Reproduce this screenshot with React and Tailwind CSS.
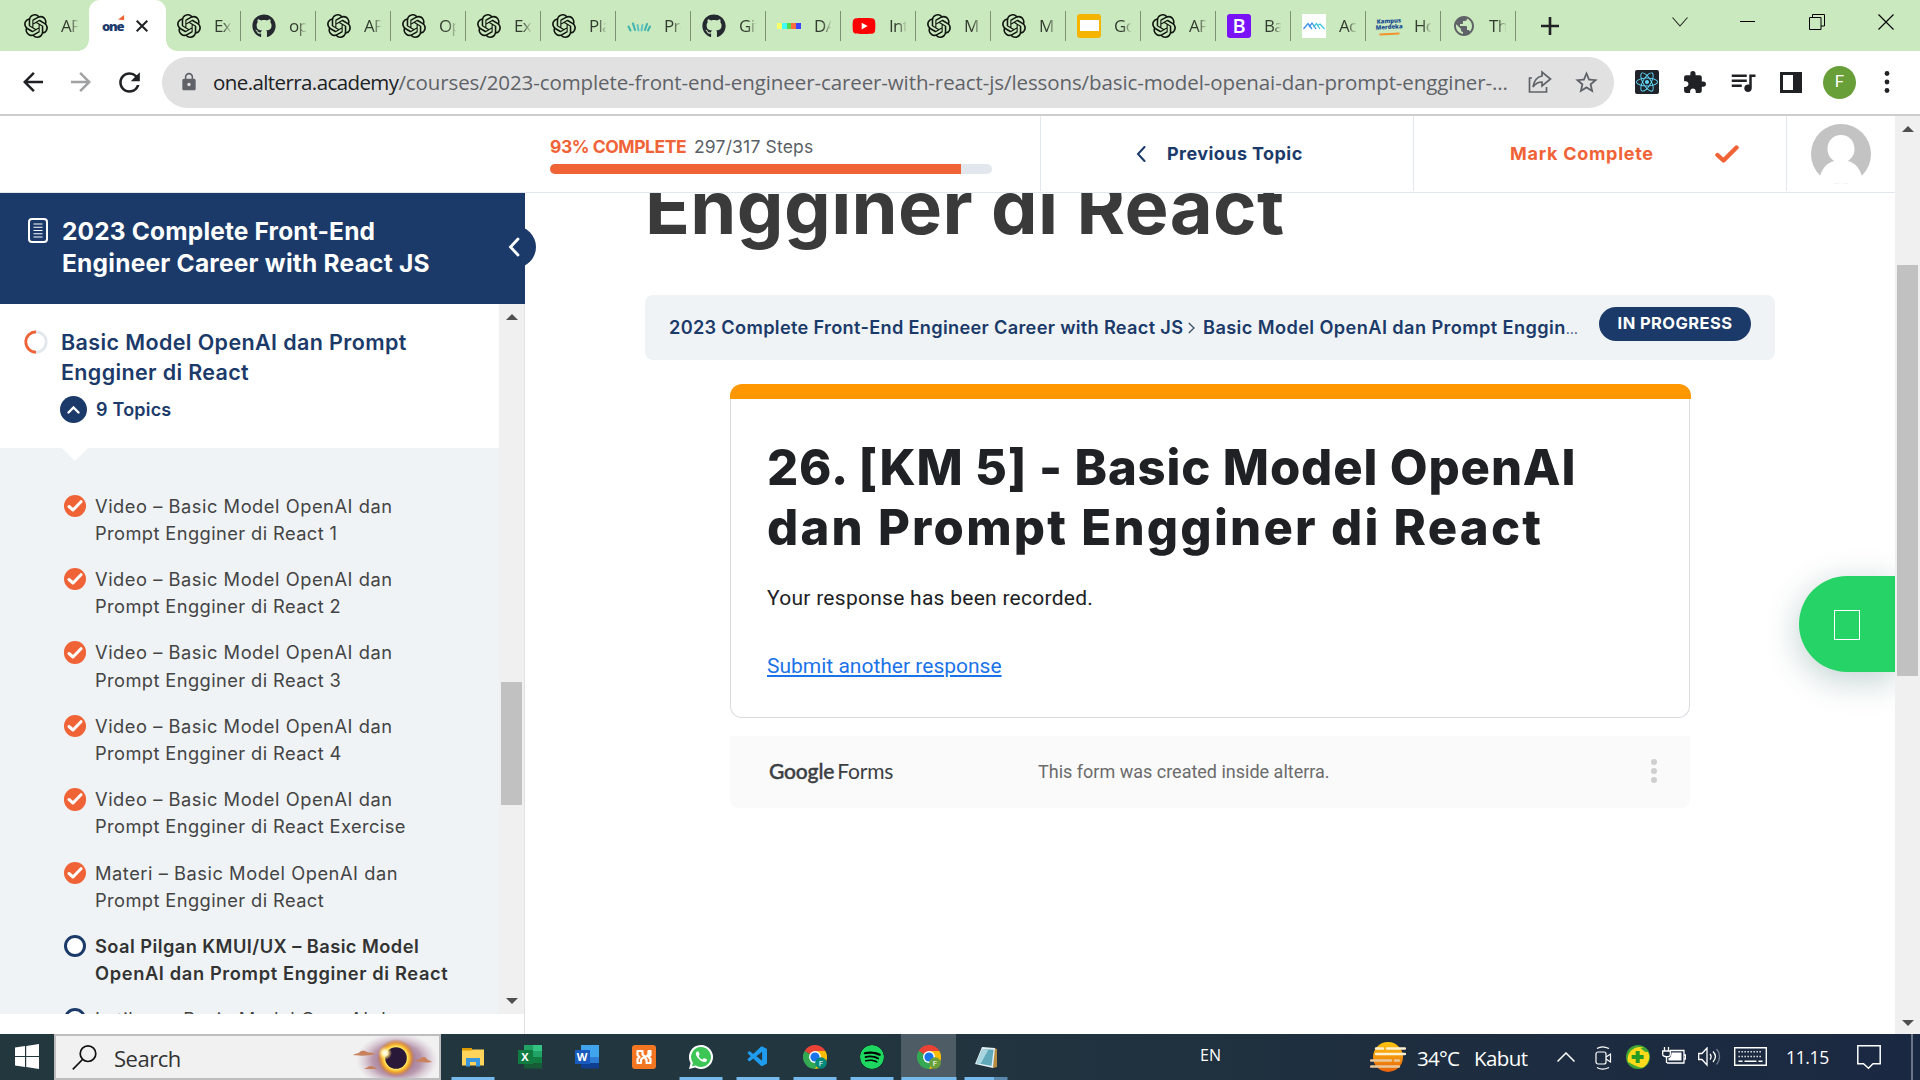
import React from "react";
import { SiOpenai, SiSpotify } from "react-icons/si";
import { FaGithub, FaYoutube, FaReact } from "react-icons/fa";
import { MdArrowBack, MdArrowForward, MdRefresh, MdLock, MdStarBorder, MdExtension, MdQueueMusic, MdPublic } from "react-icons/md";
import { VscVscode } from "react-icons/vsc";

const Gpt = () => <SiOpenai className="size-6 text-[#10160f]" />;
const Github = () => <FaGithub className="size-6 text-[#24292f]" />;
const Youtube = () => <FaYoutube className="size-6 bg-[linear-gradient(#fff,#fff)] bg-[length:10px_10px] bg-center bg-no-repeat text-[#ff0000]" />;
const Wave = () => (
  <svg viewBox="0 0 24 24" className="size-6" fill="none" strokeWidth="2" strokeLinecap="round">
    <path d="M1.500 12.500l2 4M6 9.500l2 6.500M20 10l-2 6M23 12.500l-2 4" stroke="#3eb2ad" />
    <path d="M10.500 11l1 5.500M15.500 11l-1 5.500" stroke="#5fc4bd" />
  </svg>
);
const Dalle = () => (
  <div className="flex h-6 w-6 items-center">
    <i className="h-1.5 w-[5px] bg-[#ffff66]" /><i className="h-1.5 w-[5px] bg-[#42ffff]" /><i className="h-1.5 w-[4px] bg-[#51da4c]" />
    <i className="h-1.5 w-[5px] bg-[#ff6e3c]" /><i className="h-1.5 w-[5px] bg-[#3c46ff]" />
  </div>
);
const Slides = () => <div className="flex size-6 items-center justify-center rounded-[3px] bg-[#f5b400]"><i className="h-[11px] w-[19px] bg-white" /></div>;
const Bootstrap = () => <div className="flex size-6 items-center justify-center rounded-[3px] bg-[#7a12f8] text-[20px] leading-6 font-semibold text-white">B</div>;
const Peaks = () => (
  <svg viewBox="0 0 24 24" className="size-6 bg-white" fill="none" strokeWidth="1.300">
    <path d="M1.500 15l4.500-5.500 4 5.500M7 13l3-4 4 6" stroke="#3a8fea" />
    <path d="M11.500 13l3-3.500 3.500 5.500M15 12l3-2 4.500 5" stroke="#3cc8d8" />
  </svg>
);
const Kampus = () => (
  <div className="flex h-6 w-6 -rotate-3 flex-col items-center justify-center text-[6px] leading-[6.500px] font-extrabold tracking-[-0.1px] text-[#1b4f94]">
    <span>Kampus</span><span>Merdeka</span><i className="mt-0.5 h-[2px] w-5 bg-[#f2922c]" />
  </div>
);
const Globe = () => <MdPublic className="size-6 text-[#5f6368]" />;

const TABS = [
  [Gpt, "Exa"], [Github, "ope"], [Gpt, "API"], [Gpt, "Ope"], [Gpt, "Exa"], [Gpt, "Play"], [Wave, "Pro"], [Github, "Git"], [Dalle, "DAL"],
  [Youtube, "Intr"], [Gpt, "M"], [Gpt, "M"], [Slides, "Goo"], [Gpt, "API"], [Bootstrap, "Bas"], [Peaks, "Acc"], [Kampus, "Hor"], [Globe, "The"],
];

const TabBody = ({ Icon, label }) => (
  <>
    <div className="ml-[11px] shrink-0"><Icon /></div>
    <span className="ml-[13px] w-[17px] overflow-hidden text-[17px] leading-6 tracking-[-0.7px] whitespace-nowrap text-[#333c30] [mask-image:linear-gradient(90deg,#000_50%,transparent_105%)]">{label}</span>
  </>
);

function TabStrip() {
  return (
    <div className="relative flex h-[51px] items-start bg-[#cbe9be] font-['Open_Sans',sans-serif]">
      <div className="ml-[13px] flex h-[51px] w-[76px] items-center"><TabBody Icon={Gpt} label="API" /></div>
      <div className="relative flex h-[51px] w-[77px] items-center rounded-t-[11px] bg-white before:absolute before:bottom-0 before:-left-[11px] before:size-[11px] before:bg-[radial-gradient(circle_at_0_0,transparent_10.5px,#fff_11px)] after:absolute after:-right-[11px] after:bottom-0 after:size-[11px] after:bg-[radial-gradient(circle_at_100%_0,transparent_10.5px,#fff_11px)]">
        <div className="relative ml-[13px] w-[22px] text-[13px] leading-5 font-extrabold tracking-[-1.200px] text-[#1b3a6b]">
          one
          <svg viewBox="0 0 8 8" className="absolute -top-px -right-px size-[7px]" fill="#ef6337"><path d="M0 5L7 0v6z" /></svg>
        </div>
        <svg viewBox="0 0 12 12" className="ml-3 size-3" stroke="#202124" strokeWidth="2"><path d="M.7.7l10.600 10.600M11.300.7L.7 11.300" /></svg>
      </div>
      {TABS.map(([Icon, label], i) => (
        <div key={i} className="relative flex h-[51px] w-[75px] items-center after:absolute after:top-[11px] after:right-0 after:h-[30px] after:w-px after:bg-[#7c9273]">
          <TabBody Icon={Icon} label={label} />
        </div>
      ))}
      <svg viewBox="0 0 20 20" className="mt-4 ml-6 size-5" stroke="#202124" strokeWidth="2.600"><path d="M10 1v18M1 10h18" /></svg>
      <svg viewBox="0 0 16 10" className="mt-[17px] ml-[112px] h-2.5 w-4" fill="none" stroke="#222" strokeWidth="1.100"><path d="M.5.5L8 9 15.500.5" /></svg>
      <i className="mt-[21px] ml-[52px] h-px w-[15px] bg-black" />
      <svg viewBox="0 0 16 16" className="mt-[14px] ml-[54px] size-4" fill="none" stroke="#000" strokeWidth="1"><path d="M.5 3.500h11.500v12H.5zM3.500 3.500v-3h12v11.500H12" /></svg>
      <svg viewBox="0 0 16 16" className="mt-[14px] ml-[53px] size-4" stroke="#000" strokeWidth="1.100"><path d="M.5.5l15 15M15.500.5l-15 15" /></svg>
    </div>
  );
}

function Toolbar() {
  return (
    <div className="flex h-[65px] items-center border-b-2 border-[#cdcdcd] bg-white pb-px font-['Open_Sans',sans-serif]">
      <MdArrowBack className="ml-[18px] size-[30px] text-[#202124]" />
      <MdArrowForward className="ml-[18px] size-[30px] text-[#a0a1a3]" />
      <MdRefresh className="ml-[18px] size-[31px] text-[#202124]" />
      <div className="ml-[17px] flex h-[51px] w-[1452px] items-center rounded-full bg-[#e1e1e1] text-[20.500px] leading-[51px]">
        <MdLock className="ml-[17px] size-5 text-[#5f6368]" />
        <div className="ml-[14px] w-[1304px] whitespace-nowrap text-[#5f6368]">
          <span className="tracking-[-0.590px] text-[#202124]">one.alterra.academy</span>
          <span className="tracking-[-0.100px]">/courses/2023-complete-front-end-engineer-career-with-react-js/lessons/basic-model-openai-dan-prompt-engginer-...</span>
        </div>
        <svg viewBox="0 0 24 24" className="ml-[11px] size-6" fill="none" stroke="#5f6368" strokeWidth="1.700"><path d="M4 8H1.500v14h17v-5M14 6V2l8.500 7L14 16v-4c-4 0-6.500 1.500-9 5 1-6 3.500-10 9-11z" /></svg>
        <MdStarBorder className="ml-[21px] size-[27px] text-[#5f6368]" />
      </div>
      <div className="ml-[21px] flex size-6 items-center justify-center rounded-[2px] bg-[#20232a]"><FaReact className="size-[22px] text-[#61dafb]" /></div>
      <MdExtension className="ml-[23px] size-[25px] text-[#202124]" />
      <MdQueueMusic className="ml-[21px] size-[30px] text-[#202124]" />
      <svg viewBox="0 0 22 21" className="ml-[22px] h-[21px] w-[22px]"><path d="M0 0h22v21H0zM3 3v15h10V3z" fill="#202124" fillRule="evenodd" /></svg>
      <div className="ml-[21px] flex size-[33px] items-center justify-center rounded-full bg-[#689f38] font-['Roboto',sans-serif] text-[17px] text-white">F</div>
      <svg viewBox="0 0 6 22" className="ml-7 h-[22px] w-1.5" fill="#202124"><circle cx="3" cy="2.500" r="2.400" /><circle cx="3" cy="11" r="2.400" /><circle cx="3" cy="19.500" r="2.400" /></svg>
    </div>
  );
}

function CourseHeader() {
  return (
    <header className="flex h-[77px] border-b border-[#e2e7ed] bg-white">
      <div className="w-[1040px] pt-[18px] pl-[550px]">
        <div className="flex text-[17.500px] leading-[26px] whitespace-nowrap">
          <span className="w-[144px] font-bold tracking-[-0.450px] text-[#ef6337]">93% COMPLETE</span>
          <span className="tracking-[0.180px] text-[#5a5f66]">297/317 Steps</span>
        </div>
        <div className="mt-1 h-2.5 w-[442px] overflow-hidden rounded-full bg-[#e2e7ed]"><div className="h-full w-[411px] bg-[#ef6337]" /></div>
      </div>
      <div className="mb-px flex w-[373px] items-center border-l border-[#e2e7ed] text-[18px] font-bold text-[#1b3a69]">
        <svg viewBox="0 0 10 16" className="ml-[95px] h-4 w-2.5" fill="none" stroke="#1b3a69" strokeWidth="2" strokeLinecap="round"><path d="M8.500 1L2 8l6.500 7" /></svg>
        <span className="ml-[21px] tracking-[0.430px]">Previous Topic</span>
      </div>
      <div className="mb-px flex w-[373px] items-center border-l border-[#e2e7ed] text-[18px] font-bold text-[#ef6337]">
        <span className="ml-24 w-[205px] tracking-[0.720px]">Mark Complete</span>
        <svg viewBox="0 0 24 18" className="h-[18px] w-6" fill="none" stroke="#ef6337" strokeWidth="4.400" strokeLinecap="round" strokeLinejoin="round"><path d="M2.500 10l6 5.500L21.500 2.500" /></svg>
      </div>
      <div className="mb-px flex flex-1 border-l border-[#e2e7ed]">
        <svg viewBox="0 0 60 60" className="mt-2 ml-6 size-[60px]">
          <circle cx="30" cy="30" r="30" fill="#c3c3c3" />
          <path d="M30 11c-8 0-13.500 6-13.500 14 0 5.500 3 10 7 12C15 38.500 11 46 9 52c4 5 12 8 21 8s17-3 21-8c-2-6-6-13.500-14.500-15 4-2 7-6.500 7-12 0-8-5.500-14-13.500-14z" fill="#fff" />
        </svg>
      </div>
    </header>
  );
}

const Arrow = ({ down }) => (
  <svg viewBox="0 0 12 6" className="h-1.5 w-3" fill="#505050"><path d={down ? "M0 0h12L6 6z" : "M6 0l6 6H0z"} /></svg>
);

const DONE = [
  ["Video – Basic Model OpenAI dan", "Prompt Engginer di React 1"],
  ["Video – Basic Model OpenAI dan", "Prompt Engginer di React 2"],
  ["Video – Basic Model OpenAI dan", "Prompt Engginer di React 3"],
  ["Video – Basic Model OpenAI dan", "Prompt Engginer di React 4"],
  ["Video – Basic Model OpenAI dan", "Prompt Engginer di React Exercise"],
  ["Materi – Basic Model OpenAI dan", "Prompt Engginer di React"],
];

const OpenRing = () => <i className="mt-[9px] size-[22.500px] shrink-0 rounded-full border-[3px] border-[#1b3a69] bg-white" />;

function Sidebar() {
  return (
    <aside className="flex w-[525px] flex-col border-r border-[#dfe2e5] bg-white">
      <div className="relative z-10 -mr-px flex h-[111px] bg-[#1b3a69] text-white">
        <svg viewBox="0 0 20 25" className="mt-[25px] ml-7 h-[25px] w-5" fill="none" stroke="#fff">
          <rect x="1" y="1" width="18" height="23" rx="3" strokeWidth="2" /><path d="M5.500 6h9M5.500 9.250h9M5.500 12.500h9M5.500 15.750h9M5.500 19h9" strokeWidth="1.200" />
        </svg>
        <h2 className="mt-[22px] ml-[14px] text-[24.500px] leading-8 font-bold whitespace-nowrap">
          <span className="block tracking-[0.160px]">2023 Complete Front-End</span>
          <span className="block tracking-[0.230px]">Engineer Career with React JS</span>
        </h2>
        <div className="absolute top-[33px] left-[494px] flex size-[42px] items-center justify-center rounded-full bg-[#1b3a69]">
          <svg viewBox="0 0 12 20" className="mr-[3px] h-5 w-3" fill="none" stroke="#fff" strokeWidth="2.800" strokeLinecap="round"><path d="M10 2L2.500 10l7.500 8" /></svg>
        </div>
      </div>
      <div className="flex h-[710px]">
        <div className="flex w-[499px] flex-col overflow-hidden">
          <div className="h-36 shrink-0 bg-white pt-[23px]">
            <div className="flex text-[#1b3a69]">
              <svg viewBox="0 0 24 24" className="mt-[3px] ml-6 size-6" fill="none" strokeWidth="2.700"><circle cx="12" cy="12" r="10.200" stroke="#e2e7ed" /><path d="M12 1.800a10.200 10.200 0 000 20.400" stroke="#ef6337" /></svg>
              <div className="ml-[13px] text-[21.500px] leading-[30px] font-semibold whitespace-nowrap">
                <span className="block tracking-[0.390px]">Basic Model OpenAI dan Prompt</span>
                <span className="block tracking-[0.350px]">Engginer di React</span>
              </div>
            </div>
            <div className="mt-[9px] ml-[60px] flex items-center text-[18px] leading-[27px] font-semibold text-[#1b3a69]">
              <span className="flex size-[27px] items-center justify-center rounded-full bg-[#1b3a69]">
                <svg viewBox="0 0 13 8" className="h-2 w-[13px]" fill="none" stroke="#fff" strokeWidth="2.400" strokeLinecap="round"><path d="M1.500 6.500l5-5 5 5" /></svg>
              </span>
              <span className="ml-[9px] tracking-[0.200px]">9 Topics</span>
            </div>
          </div>
          <div className="relative flex-1 overflow-hidden bg-[#eff3f6] pt-[44.500px] text-[18.300px] leading-[27.200px] whitespace-nowrap text-[#444]">
            <svg viewBox="0 0 26 13" className="absolute top-0 left-[62px] h-[13px] w-[26px]" fill="#fff"><path d="M0 0h26L13 13z" /></svg>
            {DONE.map(([a, b], i) => (
              <div key={i} className="mb-[19px] flex pl-[63.500px]">
                <span className="mt-[2px] flex size-[22.500px] shrink-0 items-center justify-center rounded-full bg-[#ef6337]">
                  <svg viewBox="0 0 16 12" className="h-3 w-4" fill="none" stroke="#fff" strokeWidth="3" strokeLinecap="round" strokeLinejoin="round"><path d="M2 6.500L6 10l8-8.300" /></svg>
                </span>
                <div className="ml-[9px]"><span className="block tracking-[0.530px]">{a}</span><span className="block tracking-[0.400px]">{b}</span></div>
              </div>
            ))}
            <div className="-mt-[7px] mb-[19px] flex pl-[63.500px] font-semibold text-[#333]">
              <OpenRing />
              <div className="mt-[7px] ml-[9px]"><span className="block tracking-[0.430px]">Soal Pilgan KMUI/UX – Basic Model</span><span className="block tracking-[0.620px]">OpenAI dan Prompt Engginer di React</span></div>
            </div>
            <div className="-mt-[7px] flex pl-[63.500px]">
              <OpenRing />
              <div className="mt-[7px] ml-[9px] tracking-[0.590px]">Latihan – Basic Model OpenAI dan</div>
            </div>
          </div>
        </div>
        <div className="flex w-[25px] flex-col items-center bg-[#f0f0f0] py-2.5">
          <Arrow />
          <i className="mt-[362px] h-[123px] w-[21px] bg-[#c1c1c1]" />
          <i className="flex-1" />
          <Arrow down />
        </div>
      </div>
    </aside>
  );
}

function Lesson() {
  return (
    <main className="relative flex-1 overflow-hidden bg-white pl-[120px]">
      <h1 className="-mt-[29px] h-[131px] text-[74px] leading-[87px] font-bold tracking-[0.400px] whitespace-nowrap text-[#3a3a3a]">Engginer di React</h1>
      <div className="flex h-[65px] w-[1130px] rounded-lg bg-[#eff3f6] text-[18.200px] leading-[65px] font-semibold whitespace-nowrap text-[#1b3a69]">
        <span className="ml-6 w-[519px] tracking-[0.310px]">2023 Complete Front-End Engineer Career with React JS</span>
        <svg viewBox="0 0 7 12" className="mt-[27px] mr-2 h-3 w-[7px]" fill="none" stroke="#3a5068" strokeWidth="1.300"><path d="M.8 1L6 6 .8 11" /></svg>
        <span className="tracking-[0.400px]">Basic Model OpenAI dan Prompt Enggin<span className="text-[14px] font-normal tracking-[-0.5px]">…</span></span>
        <span className="mt-3 mr-6 ml-auto flex h-[34px] w-[152px] items-center justify-center rounded-full bg-[#1b3a69] pb-0.5 text-[16.500px] leading-none font-bold tracking-[0.420px] text-white">IN PROGRESS</span>
      </div>
      <section className="mt-6 ml-[85px] w-[961px]">
        <div className="h-[15px] rounded-t-[12px] bg-[#ff9800]" />
        <div className="h-[319px] w-[960px] rounded-b-[12px] border border-t-0 border-[#dadce0] pl-9 font-['Roboto',sans-serif]">
          <h2 className="pt-[39px] font-['Inter',sans-serif] text-[49px] leading-[60px] font-extrabold whitespace-nowrap text-[#202124]">
            <span className="block tracking-[0.850px]">26. [KM 5] - Basic Model OpenAI</span>
            <span className="block tracking-[2.250px]">dan Prompt Engginer di React</span>
          </h2>
          <p className="mt-[26px] text-[21px] leading-7 tracking-[0.270px] text-[#202124]">Your response has been recorded.</p>
          <p className="mt-10 text-[21px] leading-7 text-[#1a73e8] underline">Submit another response</p>
        </div>
        <div className="mt-[18px] flex h-[72px] w-[960px] rounded-b-lg bg-[#fafafa] leading-[69px]">
          <span className="ml-[39px] w-[269px] font-['Lato',sans-serif] text-[21px] text-[#3c4043]"><span className="mr-[3px] font-medium tracking-[-0.150px] [-webkit-text-stroke:0.4px_#3c4043]">Google</span><span className="tracking-[-0.2px]">Forms</span></span>
          <span className="mt-px font-['Roboto',sans-serif] text-[18px] text-[#6b6b6b]">This form was created inside alterra.</span>
          <span className="mt-[23px] mr-[33px] ml-auto flex flex-col gap-[3px]"><i className="size-1.5 rounded-full bg-[#cfcfcf]" /><i className="size-1.5 rounded-full bg-[#cfcfcf]" /><i className="size-1.5 rounded-full bg-[#cfcfcf]" /></span>
        </div>
      </section>
      <div className="absolute top-[383px] right-0 flex size-24 items-center rounded-l-full bg-[#25d366] pl-[35px] shadow-[0_8px_32px_2px_rgba(18,80,74,0.24)]"><i className="mt-0.5 h-[30px] w-[26px] border-[1.500px] border-white" /></div>
    </main>
  );
}

const Explorer = () => (
  <svg viewBox="0 0 24 24" className="size-6"><path d="M1 3h10v4H1z" fill="#e09b00" /><path d="M1 5.500h9L11.500 4.500H23v16H1z" fill="#ffd45a" /><path d="M5 13h14v8.500h-4v-4.500H9v4.500H5z" fill="#3a96dd" /></svg>
);
const Office = ({ letter, c }) => (
  <div className="relative size-6">
    <svg viewBox="0 0 24 24" className="size-6"><path d="M6 0h9v6H6z" fill={c[1]} /><path d="M15 0h9v6h-9z" fill={c[0]} /><path d="M6 6h18v6H6z" fill={c[1]} /><path d="M6 12h18v6H6z" fill={c[2]} /><path d="M6 18h18v5.500H6z" fill={c[3]} /><path d="M0 5h15v14H0z" fill={c[4]} /></svg>
    <span className="absolute top-[5px] left-0 w-[15px] text-center text-[11px] leading-[14px] font-bold text-white">{letter}</span>
  </div>
);
const Excel = () => <Office letter="X" c={["#33c481", "#21a366", "#107c41", "#185c37", "#107c41"]} />;
const Word = () => <Office letter="W" c={["#41a5ee", "#41a5ee", "#2b7cd3", "#103f91", "#185abd"]} />;
const Xampp = () => (
  <svg viewBox="0 0 24 24" className="size-6"><rect width="24" height="24" rx="3" fill="#f37623" /><path d="M5.500 6h5v3.500l3 2.500 3-2.500V6h2v4l-2 2 2 2v4h-4v-3.500L12 12l-3 2.500V18H5.500v-4l2-2-2-2z" fill="none" stroke="#fff" strokeWidth="2.200" strokeLinejoin="round" /></svg>
);
const Whats = () => (
  <svg viewBox="0 0 24 24" className="size-6"><path d="M12 0a12 12 0 11-5.800 22.500L0 24l1.600-6A12 12 0 0112 0z" fill="#fff" /><path d="M12 2a10 10 0 11-5.300 18.500L3 21.300l.9-3.600A10 10 0 0112 2z" fill="#3dc656" /><path d="M8 6.500c-1.500 1-1.700 3 .5 6s5.500 5 8 4.500c1.500-.8 1.500-2 1.500-2.500l-3-1.500-1.400 1.600c-2-.8-3.200-2-4-3.700l1.100-1.300L9.500 6.500z" fill="#fff" /></svg>
);
const Code = () => <VscVscode className="size-6 text-[#1f9cf0]" />;
const Chrome = ({ badge }) => (
  <svg viewBox="0 0 24 24" className="size-6">
    <path d="M1.600 6a12 12 0 0120.800 0L12 12z" fill="#ea4335" /><path d="M22.400 6A12 12 0 0112 24V12L12 6z" fill="#fbbc04" /><path d="M1.600 6A12 12 0 0012 24l5-9-5-3z" fill="#34a853" />
    <circle cx="12" cy="12" r="6" fill="#fff" /><circle cx="12" cy="12" r="4.600" fill="#1a73e8" /><circle cx="18" cy="18" r="5.800" fill={badge} />
    <text x="18" y="21" fontSize="8" textAnchor="middle" fill="#fff" fontFamily="Roboto">F</text>
  </svg>
);
const Spotify = () => <SiSpotify className="size-6 rounded-full bg-black text-[#1ed760]" />;
const Notepad = () => (
  <svg viewBox="0 0 24 24" className="size-6"><path d="M20 3l3 1v18l-4 1z" fill="#b98b3f" /><path d="M8 2l13 1-2 20L1 19z" fill="#e3f1f5" /><path d="M8.500 4l11 .800-2 16.200-15-3z" fill="#5fa9bb" /><path d="M8.500 4l6 .500-8 14.500-4-1z" fill="#a8d5df" /></svg>
);

const APPS = [
  [Explorer, "run"], [Excel, ""], [Word, ""], [Xampp, ""], [Whats, "run"], [Code, "run"],
  [() => <Chrome badge="#00897b" />, "run"], [Spotify, "run"], [() => <Chrome badge="#689f38" />, "active"], [Notepad, "multi"],
];
const BAR = { run: "w-[43px] bg-[#76b9ed]", active: "w-[55px] bg-[#76b9ed]", multi: "w-[43px] bg-[linear-gradient(90deg,#76b9ed_29px,#5a87ae_29px)]", "": "w-0" };

function Taskbar() {
  return (
    <footer className="flex h-[46px] bg-[linear-gradient(90deg,#23373f_0%,#22363f_45%,#1e2e3f_72%,#1b2842_100%)] font-['Open_Sans',sans-serif] text-white">
      <svg viewBox="0 0 24 25" className="mt-2.5 ml-[15px] h-[25px] w-6" fill="#fff"><path d="M0 3.500l10-1.400V12H0zM11.200 1.900L24 0v12H11.200zM0 13h10v9.900L0 21.500zM11.200 13H24v12l-12.800-1.900z" /></svg>
      <div className="ml-[15px] flex h-[46px] w-[387px] items-center overflow-hidden border-2 border-[#bdbdbd] bg-[#f1f1f1]">
        <svg viewBox="0 0 25 25" className="ml-4 size-[25px]" fill="none" stroke="#111" strokeWidth="1.700"><circle cx="16" cy="8.700" r="7.800" /><path d="M10.500 14.500L.8 24.300" /></svg>
        <span className="mt-0.5 ml-[17px] text-[22px] leading-[40px] tracking-[-0.500px] text-[#333]">Search</span>
        <svg viewBox="0 0 84 44" className="mt-0.5 mr-0.5 ml-auto h-11 w-[84px]">
          <defs>
            <radialGradient id="haze"><stop offset="0" stopColor="#7b4c86" /><stop offset=".6" stopColor="#a67a96" stopOpacity=".75" /><stop offset="1" stopColor="#c9b0c4" stopOpacity="0" /></radialGradient>
            <radialGradient id="glow"><stop offset=".6" stopColor="#ffe45c" /><stop offset=".75" stopColor="#f0a52a" /><stop offset="1" stopColor="#c0663a" stopOpacity="0" /></radialGradient>
            <radialGradient id="spark"><stop offset="0" stopColor="#fff" /><stop offset=".4" stopColor="#fff3b0" /><stop offset="1" stopColor="#ffd24a" stopOpacity="0" /></radialGradient>
          </defs>
          <ellipse cx="44" cy="24" rx="41" ry="27" fill="url(#haze)" />
          <circle cx="43" cy="22" r="19" fill="url(#glow)" /><circle cx="43" cy="22" r="10.800" fill="#2a1838" />
          <circle cx="32" cy="17" r="7" fill="url(#spark)" />
          <path d="M0 19c3-2 5-1 7-3s5-1 7 0 6 0 8 2c-5 2-17 2-22 1zM61 25c3-2 5-1 7-3s5-1 6 1 3 1 5 3c-5 1-12 0-18-1zM11 33c3-1 4-3 7-3s4 2 6 3z" fill="#c9805c" />
        </svg>
      </div>
      <div className="ml-[3px] flex">
        {APPS.map(([Icon, state], i) => (
          <div key={i} className="relative flex h-[46px] w-[57px] justify-center">
            <div className={state === "active" ? "flex w-[55px] justify-center bg-[#4e5d65] pt-[11px]" : "pt-[11px]"}><Icon /></div>
            <i className={`absolute bottom-0 left-1/2 h-[3px] -translate-x-1/2 ${BAR[state]}`} />
          </div>
        ))}
      </div>
      <span className="mt-2.5 ml-[186px] w-[170px] text-[16px] leading-[22px]">EN</span>
      <svg viewBox="0 0 36 32" className="mt-[7px] h-8 w-9"><defs><linearGradient id="sun" x2="0" y2="1"><stop stopColor="#ffc50f" /><stop offset="1" stopColor="#e8620c" /></linearGradient></defs><circle cx="18" cy="16" r="15" fill="url(#sun)" /><path d="M6 7.500h7M17 7.500h18M6 13h29" stroke="#fdf1d3" strokeWidth="2.400" strokeLinecap="round" /><path d="M1 19.500h20M25 19.500h4M1 25.500h28" stroke="#e9c79a" strokeWidth="2.400" strokeLinecap="round" /></svg>
      <span className="ml-[11px] w-[57px] text-[20.500px] leading-[48px] tracking-[-0.7px]">34°C</span>
      <span className="w-[83px] text-[20.500px] leading-[48px] tracking-[-0.6px]">Kabut</span>
      <svg viewBox="0 0 18 10" className="mt-[18px] h-2.5 w-[18px]" fill="none" stroke="#fff" strokeWidth="1.500"><path d="M.5 9.500L9 1l8.500 8.500" /></svg>
      <svg viewBox="0 0 17 24" className="mt-3 ml-5 h-6 w-[17px]" fill="none" stroke="#fff" strokeWidth="1.200"><rect x="1" y="6" width="10" height="12" rx="2" /><path d="M11 11l4.500-3v8L11 13M2 2.500c3-2 8-2 12 0M2 21.500c3 2 8 2 12 0" /></svg>
      <svg viewBox="0 0 24 24" className="mt-[11px] ml-3.5 size-6"><circle cx="12" cy="12" r="12" fill="#3fa535" /><path d="M2 17A12 12 0 0118 3c-7 0-3 4 4 4a12 12 0 01-4 15c-5 2-8-2-16-5z" fill="#ffd91c" /><circle cx="11.500" cy="12" r="9" fill="#ffd91c" /><path d="M9.700 6h4v4h4v4h-4v4h-4v-4h-4v-4h4z" fill="#259b24" /></svg>
      <svg viewBox="0 0 24 18" className="mt-[13px] ml-3 h-[18px] w-6" fill="none" stroke="#fff" strokeWidth="1.300"><path d="M2.500 0v4M6.500 0v4M.7 4h7.600v3.500c0 3-7.600 3-7.600 0zM4.500 10v6M8 3.500h14V16H5M22.500 8h1.200v4h-1.200" /><path d="M9.500 5.500h10v8H6.500V11c2 0 3-2 3-5.500z" fill="#fff" stroke="none" /></svg>
      <svg viewBox="0 0 23 20" className="mt-[13px] ml-3 h-5 w-[23px]" fill="none" stroke="#fff" strokeWidth="1.300"><path d="M.7 6.500H4L9 1v17l-5-5.500H.7zM12 7c1.200 1.500 1.200 4 0 5.500M15 4.500c3 3 3 7 0 10.500" /><path d="M18.500 2c4 4 4 11 0 15.500" stroke="#6f7a8c" /></svg>
      <svg viewBox="0 0 33 19" className="mt-[13px] ml-[13px] h-[19px] w-[33px]" fill="none" stroke="#fff" strokeWidth="1.400"><path d="M.7.7h31.600v17.600H.7z" /><path d="M4.500 4.800h24M4.500 9.500h24" strokeDasharray="1.300 1.700" /><path d="M4.500 14.200h4M10.500 14.200h12M24.500 14.200h4" /></svg>
      <span className="ml-[19px] w-[71px] text-[17.500px] leading-[46px] tracking-[-0.350px]">11.15</span>
      <svg viewBox="0 0 24 25" className="mt-[11px] h-[25px] w-6" fill="none" stroke="#fff" strokeWidth="1.500"><path d="M.8.8h22.400v18H16L11.500 23.300 6.500 18.800H.8z" /></svg>
      <i className="ml-[30px] h-full w-0.5 bg-[#6b7587]" />
    </footer>
  );
}

export default function App() {
  return (
    <div className="flex h-[1080px] w-[1920px] flex-col overflow-hidden bg-white font-['Inter',sans-serif]">
      <TabStrip />
      <Toolbar />
      <div className="flex h-[918px]">
        <div className="flex w-[1895px] flex-col">
          <CourseHeader />
          <div className="flex h-[841px]"><Sidebar /><Lesson /></div>
        </div>
        <div className="flex w-[25px] flex-col items-center bg-[#f0f0f0] pt-2.5 pb-2">
          <Arrow />
          <i className="mt-[133px] h-[411px] w-[21px] bg-[#c1c1c1]" />
          <i className="flex-1" />
          <Arrow down />
        </div>
      </div>
      <Taskbar />
    </div>
  );
}
